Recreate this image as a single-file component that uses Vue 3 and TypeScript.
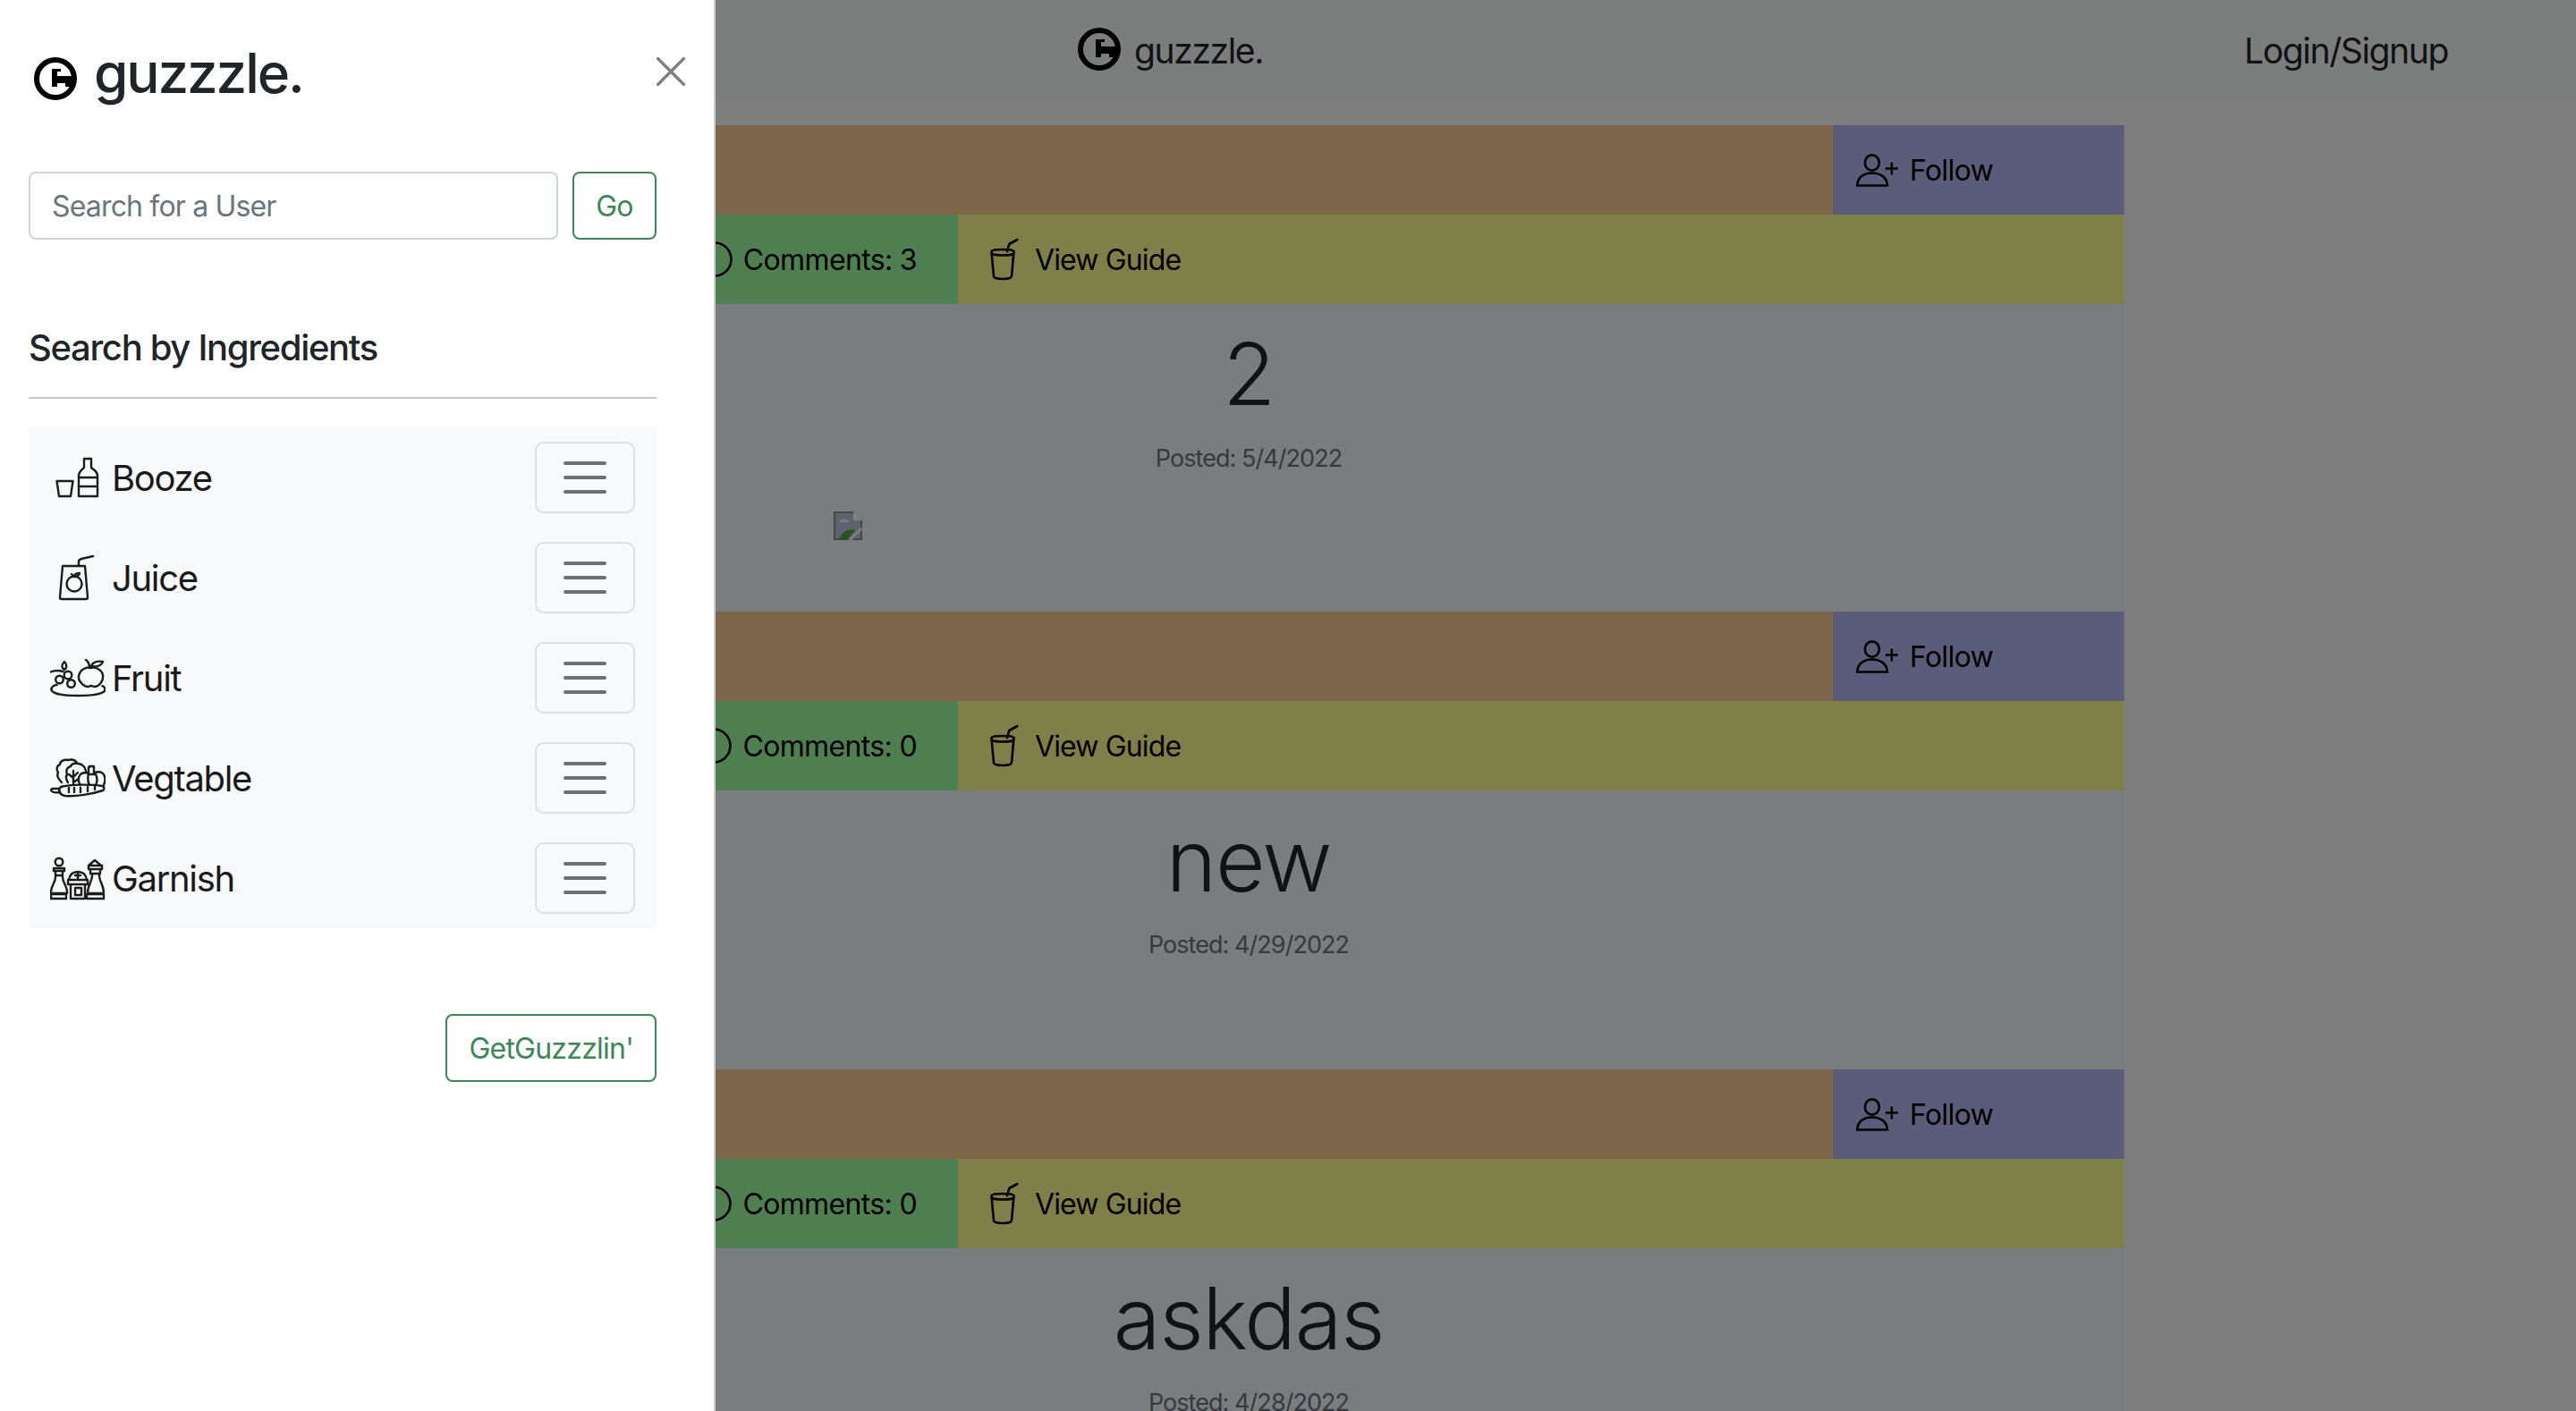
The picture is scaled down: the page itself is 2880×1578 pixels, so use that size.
<script setup lang="ts">
interface Post { title: string; date: string; comments: number; broken: boolean }
const posts: Post[] = [
  { title: '2', date: '5/4/2022', comments: 3, broken: true },
  { title: 'new', date: '4/29/2022', comments: 0, broken: false },
  { title: 'askdas', date: '4/28/2022', comments: 0, broken: false }
]
const ingredients: string[] = ['Booze', 'Juice', 'Fruit', 'Vegtable', 'Garnish']
</script>

<template>
  <div class="page">
    <nav class="topnav">
      <a class="brand">
        <svg class="logo" viewBox="0 0 50 50"><circle cx="25" cy="25" r="21" fill="none" stroke="#000" stroke-width="6" /><path d="M21 14h10v3h-4v5h18v8h-3v4h-6v-4H27v4h-6z" fill="#000" /></svg>
        <span>guzzzle.</span>
      </a>
      <a class="login">Login/Signup</a>
    </nav>

    <main class="feed">
      <article v-for="post in posts" :key="post.title" class="card">
        <div class="row">
          <div class="cell-brown"></div>
          <div class="cell-follow">
            <svg class="ic-follow" viewBox="0 0 48 37" fill="none" stroke="#000" stroke-width="2.6">
              <ellipse cx="18" cy="10" rx="8" ry="8.6" />
              <path d="M1.500 35.500c0-9 7-14 16.500-14s17 5 17 14z" />
              <path d="M33 16.500h14M40 9.500v14" stroke-width="2.4" />
            </svg>
            <span class="cell-text follow-text">Follow</span>
          </div>
        </div>
        <div class="row">
          <div class="cell-comments">
            <svg class="ic-comment" viewBox="0 0 40 40" fill="none" stroke="#000" stroke-width="2.6"><circle cx="20" cy="20" r="18.500" /></svg>
            <span class="cell-text">Comments: {{ post.comments }}</span>
          </div>
          <div class="cell-guide">
            <svg class="ic-cup" viewBox="0 0 32 48" fill="none" stroke="#000" stroke-width="2.6" stroke-linecap="round" stroke-linejoin="round">
              <path d="M1.500 15c2-2.600 23-2.600 25 0l-2.500 28c-.3 4-19.700 4-20 0z" />
              <path d="M1.800 18c5 2 20 2 24.500 0" />
              <path d="M19 15l2.300-8 9-5" />
            </svg>
            <span class="cell-text guide-text">View Guide</span>
          </div>
        </div>
        <div class="body" :class="{ 'has-image': post.broken }">
          <h1 class="title">{{ post.title }}</h1>
          <p class="posted">Posted: {{ post.date }}</p>
          <svg v-if="post.broken" class="broken" viewBox="0 0 32 32">
            <path d="M0 0h22l10 10v22H0z" fill="#b8c4dc" />
            <path d="M22 0l10 10H22z" fill="#fff" />
            <path d="M0 0h22v2H2v28h28V10h2v22H0z" fill="#8c8f96" />
            <path d="M6 12c3-5 9-5 12 0z" fill="#f4f7fb" />
            <path d="M6 32c2-9 11-14 18-11l-9 11z" fill="#58a63e" />
            <path d="M16 32l14-14 2 2-12 12z" fill="#fff" />
          </svg>
        </div>
      </article>
    </main>

    <div class="backdrop"></div>

    <aside class="offcanvas">
      <header class="off-head">
        <div class="off-brand">
          <svg class="off-logo" viewBox="0 0 50 50"><circle cx="25" cy="25" r="21" fill="none" stroke="#000" stroke-width="6" /><path d="M21 14h10v3h-4v5h18v8h-3v4h-6v-4H27v4h-6z" fill="#000" /></svg>
          <span>guzzzle.</span>
        </div>
        <svg class="close" viewBox="0 0 32 32" stroke="#808080" stroke-width="3.400" stroke-linecap="round"><path d="M1.500 1.500l29 29M30.500 1.500l-29 29" /></svg>
      </header>

      <div class="off-body">
        <form class="search">
          <input class="search-input" type="text" placeholder="Search for a User" />
          <button class="btn-green go" type="button"><span class="btn-text">Go</span></button>
        </form>

        <h5 class="section">Search by Ingredients</h5>
        <hr class="rule" />

        <div class="list">
          <div v-for="name in ingredients" :key="name" class="list-row">
            <span class="ing">
              <svg class="ing-icon" viewBox="0 0 62 56" fill="none" stroke="#1c1c1c" stroke-width="2.400" stroke-linejoin="round" stroke-linecap="round">
                <g v-if="name === 'Booze'">
                  <path d="M7.500 32h18l-2.500 17H10z" />
                  <path d="M38 7h8v10c4 3 7 5 7 9v23H32V26c0-4 3-6 6-9zM32 28h21M32 38h21" />
                </g>
                <g v-else-if="name === 'Juice'">
                  <path d="M14 15h25l3 35q0 2-2 2H13q-2 0-2-2z" />
                  <path d="M32 15V10q0-2 3-3l13-3" />
                  <circle cx="27" cy="35" r="8.500" />
                  <path d="M27 27l-3-3M27 26q1-3 6-3q-1 4-6 4" />
                </g>
                <g v-else-if="name === 'Fruit'">
                  <path d="M1.500 41c0 5 14 7 30 7s30-2 30-7c0-2-1.500-3-3-4" />
                  <path d="M1.500 41c0-3 3-5 6-5" />
                  <path d="M45.500 17c-4-1.500-12 1-13.500 9-1 6 6 12 10 12 2 0 2-1 4-1s2 1 4 1c4 0 10-6 9-13-1-6-8-9.500-13.500-8z" />
                  <path d="M44 17c0-4-1-7-4-9M46 15c2-5 8-6 13-5-2 5-8 6-13 5z" />
                  <circle cx="20" cy="25" r="4.300" /><circle cx="10.500" cy="30" r="4.300" /><circle cx="23.500" cy="34.500" r="4.300" />
                  <path d="M16 19c-3-2-4-5 0-9 3 3 3 7 0 9zM.5 21.500c5-2 9-2 14-.5" />
                </g>
                <g v-else-if="name === 'Vegtable'">
                  <path d="M13 33c-4-4-6-8-4-11-3-4-1-8 2-9 0-4 5-6 9-5 4-1 8 0 10 3" />
                  <path d="M20 33c-2-3-3-6-1-9-2-4 0-8 4-9 1-3 5-4 8-3 4 0 8 3 9 8" />
                  <path d="M26 34V20M26 28l-5-4M26 27l5-5M26 33l6-4" />
                  <path d="M34 36c-3-4-3-9 0-12 2-2 5-2 8-2M50 22c3-1 7-1 9 1 3 3 3 8 1 13M44 36c-2-4-2-9-1-13M51 24c2 4 2 8 0 12" />
                  <path d="M43 24V16h1v-1h5v9z" />
                  <path d="M12 38c10-3 35-3 46-1 3 .5 3 4 1 5-12 4-30 7-42 6-6-1-9-6-5-10z" />
                  <path d="M10 40H3q-3 1-1 3t9 1M21 39v5M27 39v5M34 39v5M42 38v5M50 38v3" />
                </g>
                <g v-else>
                  <circle cx="10" cy="10" r="4.300" />
                  <path d="M4 17h12v3H4zM6 20h8v5H6zM6 25c1 8-6 12-5 20h18c1-8-6-12-5-20" />
                  <path d="M1 46h17v5H1z" />
                  <path d="M21 30c1-7 5-9 10-9s9 2 10 9M20 30h22v5H20zM23 35h16v16H23zM28 39h7v8h-7zM28 25h6M31 22v6" />
                  <path d="M43 14l7-6 7 6zM43 14h15v4H43zM45 18h11v5H45zM47 23c1 8-5 12-5 22h18c0-10-6-14-5-22" />
                  <path d="M41 46h19v5H41z" />
                </g>
              </svg>
              <span class="ing-name">{{ name }}</span>
            </span>
            <button class="toggler" type="button"><span class="bars"><i></i><i></i><i></i></span></button>
          </div>
        </div>

        <div class="submit-row">
          <button class="btn-green" type="button"><span class="btn-text">GetGuzzzlin'</span></button>
        </div>
      </div>
    </aside>
  </div>
</template>

<style>
html, body { margin: 0; padding: 0; background: #fff; overflow: hidden; }
</style>

<style scoped>
* { box-sizing: border-box; }
.page {
  position: relative;
  width: 2880px;
  height: 1578px;
  overflow: hidden;
  background: #fff;
  font-family: Inter, "Liberation Sans", sans-serif;
  font-size: 32px;
  line-height: 48px;
  color: #212529;
  letter-spacing: -0.02em;
}
.topnav {
  display: flex;
  align-items: center;
  height: 112px;
  padding: 2px 143px 0 1204px;
  background: #f8fbfa;
}
.brand { display: flex; align-items: center; gap: 14px; font-size: 39px; letter-spacing: -0.035em; color: #212529; }
.logo { width: 50px; height: 50px; margin-top: -4px; }
.login { margin-left: auto; font-size: 39px; letter-spacing: -0.035em; color: #212529; }
.feed { width: 1958px; margin-left: 417px; padding-top: 28px; }
.row { display: flex; height: 100px; color: #000; }
.cell-brown { flex: 1; background: #fccc98; }
.cell-text { padding-top: 2px; }
.cell-follow {
  display: flex;
  align-items: center;
  gap: 12px;
  width: 326px;
  padding-left: 26px;
  background: #b6b8f4;
}
.follow-text { letter-spacing: -0.02em; }
.ic-follow { width: 48px; height: 37px; }
.cell-comments {
  display: flex;
  align-items: center;
  justify-content: flex-end;
  gap: 12px;
  width: 654px;
  padding-right: 46px;
  background: #9ffea2;
}
.ic-comment { width: 40px; height: 40px; }
.cell-guide {
  display: flex;
  flex: 1;
  align-items: center;
  gap: 18px;
  padding-left: 36px;
  background: #fffe92;
}
.guide-text { letter-spacing: -0.027em; }
.ic-cup { width: 32px; height: 48px; }
.body { padding: 21px 0 118px; background: #f4fafc; text-align: center; }
.body.has-image { padding-bottom: 82px; }
.title { margin: 0 0 16px; font-size: 96px; line-height: 115px; font-weight: 340; color: #212529; letter-spacing: -0.015em; }
.posted { margin: 0; font-size: 27px; line-height: 42px; letter-spacing: -0.035em; color: #6c757d; }
.broken { display: block; width: 32px; height: 32px; margin: 38px 0 -2px 515px; }
.backdrop { position: absolute; inset: 0; background: rgba(0, 0, 0, 0.5); }
.offcanvas {
  position: absolute;
  top: 0;
  left: 0;
  width: 800px;
  height: 1578px;
  background: #fff;
  border-right: 2px solid rgba(0, 0, 0, 0.2);
}
.off-head { display: flex; align-items: flex-start; justify-content: space-between; height: 192px; padding: 50px 32px 0 37px; }
.off-brand { display: flex; align-items: center; gap: 18px; height: 64px; font-size: 62px; font-weight: 500; color: #212529; letter-spacing: -0.034em; }
.off-logo { width: 50px; height: 50px; margin-top: 12px; }
.close { width: 32px; height: 32px; margin-top: 14px; }
.off-body { padding: 0 64px 0 32px; }
.search { display: flex; gap: 16px; margin: 0; }
.search-input {
  flex: 1;
  min-width: 0;
  height: 76px;
  padding: 0 24px;
  border: 2px solid #ced4da;
  border-radius: 8px;
  background: #fff;
  font: inherit;
  color: #212529;
  letter-spacing: -0.026em;
  outline: none;
}
.search-input::placeholder { color: #6c757d; opacity: 1; }
.btn-green {
  height: 76px;
  padding: 0 24px;
  border: 2px solid #3e8659;
  border-radius: 8px;
  background: #fff;
  color: #3e8659;
  font: inherit;
  letter-spacing: -0.024em;
}
.btn-text { position: relative; top: 1px; }
.go { width: 94px; padding: 0; }
.section { margin: 97px 0 0; font-size: 40px; line-height: 48px; font-weight: 500; color: #212529; letter-spacing: -0.033em; }
.rule { height: 2px; margin: 31px 0 32px; border: 0; background: #c8c8c8; }
.list { background: #f8f9fa; }
.list-row { display: flex; align-items: center; justify-content: space-between; height: 112px; padding: 0 24px; }
.ing { display: flex; align-items: center; gap: 7px; }
.ing-icon { width: 62px; height: 56px; }
.ing-name { padding-top: 2px; font-size: 40px; color: #1a1a1a; letter-spacing: -0.033em; }
.toggler {
  display: flex;
  align-items: center;
  justify-content: center;
  width: 112px;
  height: 80px;
  padding: 0;
  border: 2px solid rgba(0, 0, 0, 0.1);
  border-radius: 10px;
  background: transparent;
}
.bars { display: flex; flex-direction: column; gap: 12px; width: 48px; }
.bars i { display: block; height: 4px; border-radius: 2px; background: #6f6f6f; }
.submit-row { display: flex; justify-content: flex-end; margin-top: 96px; }
</style>
